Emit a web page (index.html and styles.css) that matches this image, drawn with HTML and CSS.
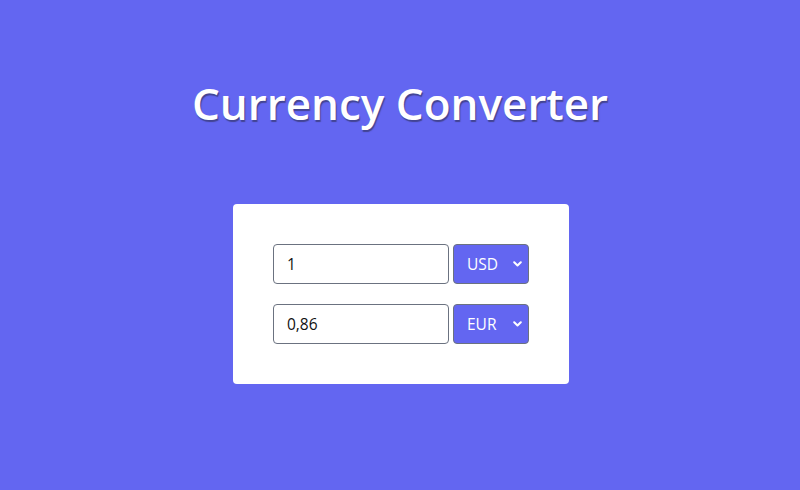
FILE: index.html
```html
<!DOCTYPE html>
<html>
<head>
<meta charset="utf-8">
<link rel="stylesheet" href="styles.css">
</head>
<body>
<main class="page">
  <h1 class="title">Currency Converter</h1>
  <section class="card">
    <div class="row">
      <input class="amount" type="text" value="1">
      <div class="select-wrap">
        <select class="currency"><option>USD</option></select>
        <svg class="chev" width="9" height="6" viewBox="0 0 9 6"><path d="M1.2 1.2l3.3 3.3 3.3-3.3" fill="none" stroke="#fff" stroke-width="2" stroke-linecap="round" stroke-linejoin="round"/></svg>
      </div>
    </div>
    <div class="row">
      <input class="amount" type="text" value="0,86">
      <div class="select-wrap">
        <select class="currency"><option>EUR</option></select>
        <svg class="chev" width="9" height="6" viewBox="0 0 9 6"><path d="M1.2 1.2l3.3 3.3 3.3-3.3" fill="none" stroke="#fff" stroke-width="2" stroke-linecap="round" stroke-linejoin="round"/></svg>
      </div>
    </div>
  </section>
</main>
</body>
</html>
```
FILE: styles.css
```css
html, body {
  margin: 0;
  padding: 0;
  background: #6366f1;
  font-family: "Open Sans", "Noto Sans", sans-serif;
}
.page {
  display: flex;
  flex-direction: column;
  align-items: center;
  padding-top: 74px;
}
.title {
  margin: 0;
  font-size: 44px;
  line-height: 58px;
  font-weight: 600;
  color: #ffffff;
  text-shadow: 1px 2px 1px rgba(40, 40, 70, 0.55);
  letter-spacing: 0;
}
.card {
  margin-top: 72px;
  margin-left: 2px;
  width: 336px;
  box-sizing: border-box;
  padding: 40px;
  background: #ffffff;
  border-radius: 4px;
  display: flex;
  flex-direction: column;
  gap: 20px;
}
.row {
  display: flex;
  gap: 4px;
}
.amount {
  box-sizing: border-box;
  width: 176px;
  height: 40px;
  margin: 0;
  border: 1px solid #6b7280;
  border-radius: 4px;
  padding: 0 13px;
  font-family: inherit;
  font-size: 15.5px;
  color: #111;
  background: #fff;
  outline: none;
}
.select-wrap {
  position: relative;
  width: 76px;
  height: 40px;
}
.currency {
  appearance: none;
  -webkit-appearance: none;
  box-sizing: border-box;
  width: 76px;
  height: 40px;
  margin: 0;
  border: 1px solid #6b7280;
  border-radius: 4px;
  background: #6366f1;
  color: #ffffff;
  font-family: inherit;
  font-size: 15.5px;
  padding: 0 0 0 13px;
  outline: none;
}
.chev {
  position: absolute;
  right: 7px;
  top: 17px;
  pointer-events: none;
}
```
